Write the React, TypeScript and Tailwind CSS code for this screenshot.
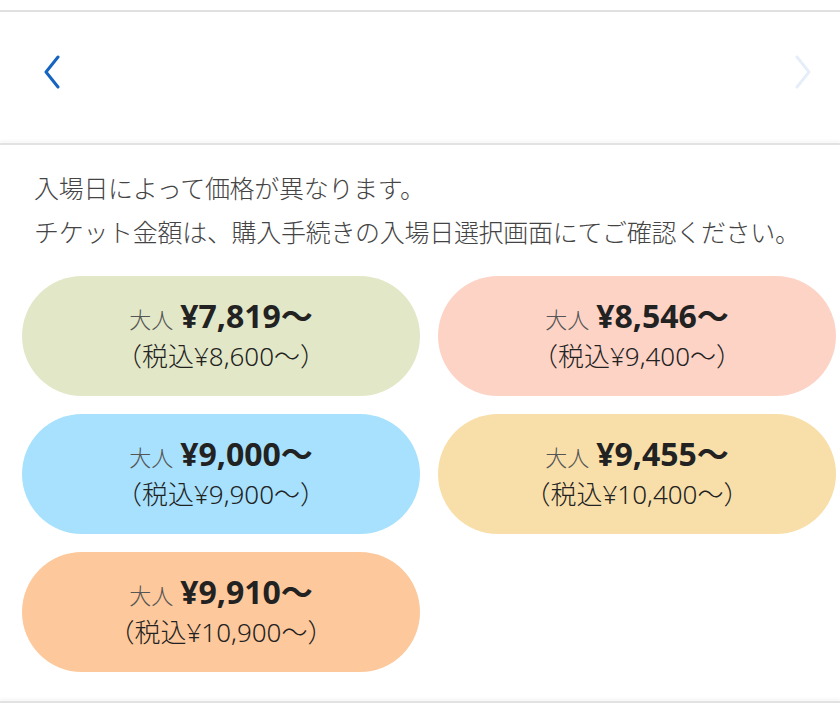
type Price = { base: string; tax: string; color: string }

const prices: Price[] = [
  { base: '¥7,819〜', tax: '（税込¥8,600〜）', color: 'bg-[#e2e8c7]' },
  { base: '¥8,546〜', tax: '（税込¥9,400〜）', color: 'bg-[#fdd3c6]' },
  { base: '¥9,000〜', tax: '（税込¥9,900〜）', color: 'bg-[#a7e1fd]' },
  { base: '¥9,455〜', tax: '（税込¥10,400〜）', color: 'bg-[#f8dfa9]' },
  { base: '¥9,910〜', tax: '（税込¥10,900〜）', color: 'bg-[#fdc89b]' },
]

function Chevron({ dir }: { dir: 'left' | 'right' }) {
  return (
    <svg width="18" height="34" viewBox="0 0 18 34" fill="none">
      <path
        d={dir === 'left' ? 'M15 2 L3 17 L15 32' : 'M3 2 L15 17 L3 32'}
        stroke="currentColor"
        strokeWidth={3}
        strokeLinecap="round"
        strokeLinejoin="round"
      />
    </svg>
  )
}

function PricePill({ p }: { p: Price }) {
  return (
    <div className={`flex h-[120px] flex-col items-center justify-center rounded-full ${p.color}`}>
      <div className="flex items-baseline gap-[7px] leading-[37px]">
        <span className="text-[22px] font-light text-[#555]">大人</span>
        <span className="text-[32px] font-bold text-[#222]">{p.base}</span>
      </div>
      <div className="text-[26px] font-light leading-[37px] text-[#222]">{p.tax}</div>
    </div>
  )
}

export default function App() {
  return (
    <div
      className="min-h-[726px] w-[840px] overflow-hidden bg-white"
      style={{ fontFamily: '"Noto Sans", "Noto Sans CJK JP", sans-serif' }}
    >
      <div className="h-[10px]" />
      <div className="h-[2px] bg-[#e0e0e0]" />

      <header className="flex h-[131px] items-start justify-between pl-[43px] pr-[28px] pt-[43px]">
        <button className="text-[#1565c0]">
          <Chevron dir="left" />
        </button>
        <button className="text-[#e6eef9]">
          <Chevron dir="right" />
        </button>
      </header>
      <div className="h-[2px] bg-[#e2e2e2] shadow-[0_-2px_3px_rgba(0,0,0,0.06)]" />

      <main className="pt-[21px]">
        <p className="whitespace-nowrap pl-[34px] text-[25px] font-light leading-[44px] tracking-[-0.3px] text-[#444]">
          入場日によって価格が異なります。
          <br />
          チケット金額は、購入手続きの入場日選択画面にてご確認ください。
        </p>

        <div className="mt-[22px] grid grid-cols-[398px_398px] gap-x-[18px] gap-y-[18px] pl-[22px]">
          {prices.map((p) => (
            <PricePill key={p.base} p={p} />
          ))}
        </div>
      </main>

      <div className="mt-[29px] h-[2px] bg-[#e2e2e2] shadow-[0_-2px_3px_rgba(0,0,0,0.06)]" />
    </div>
  )
}
